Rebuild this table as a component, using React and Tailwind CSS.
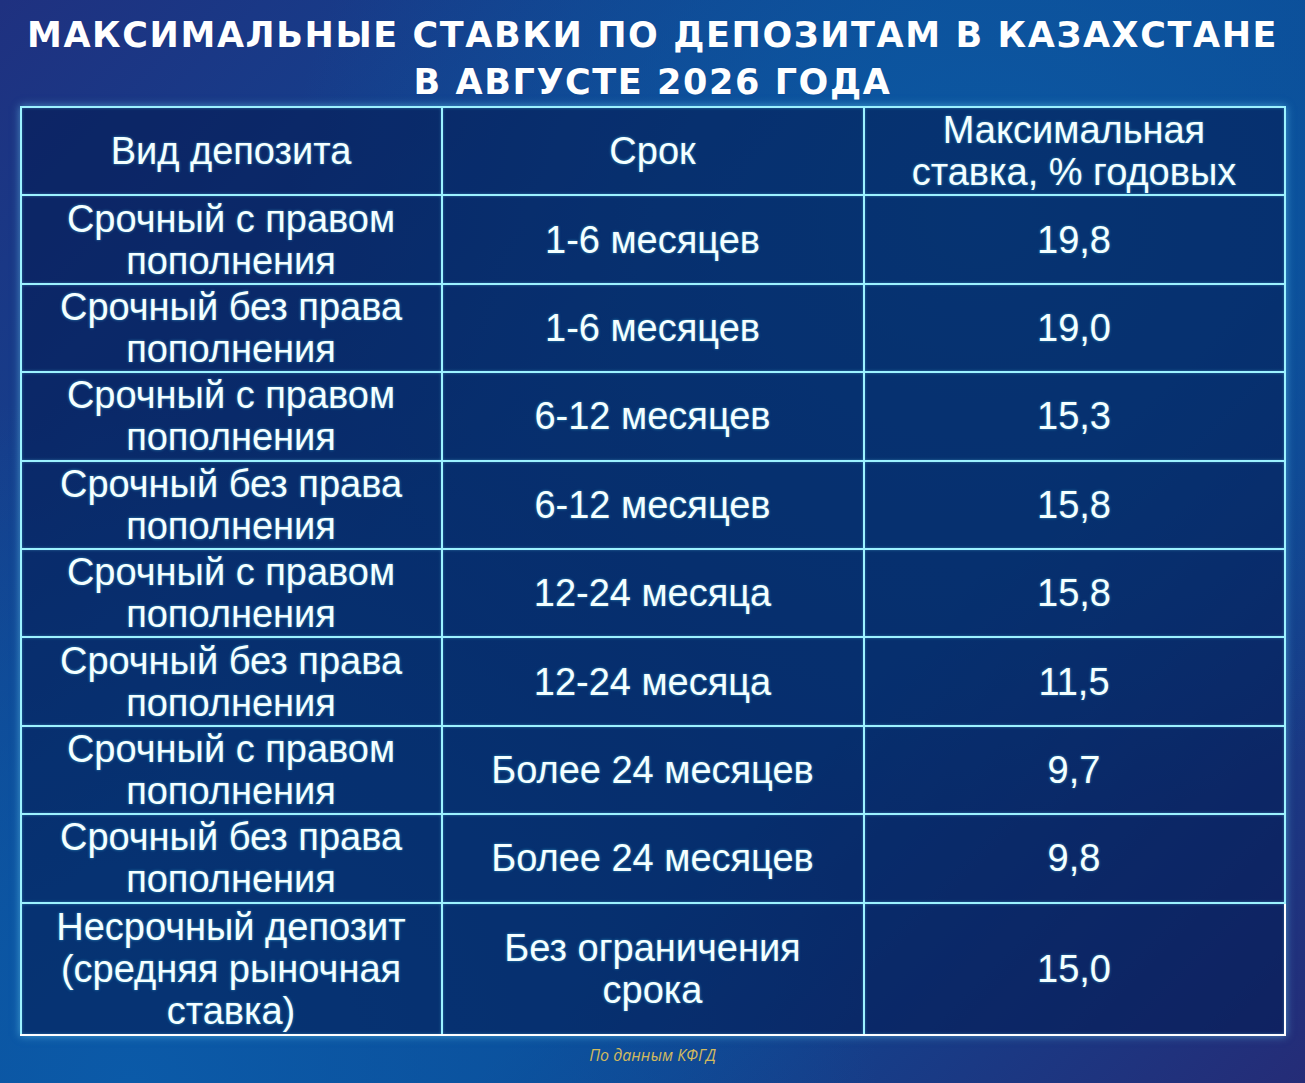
import React from 'react';

const rows = [
    { kind: ['Срочный с правом', 'пополнения'], term: ['1-6 месяцев'], rate: '19,8' },
    { kind: ['Срочный без права', 'пополнения'], term: ['1-6 месяцев'], rate: '19,0' },
    { kind: ['Срочный с правом', 'пополнения'], term: ['6-12 месяцев'], rate: '15,3' },
    { kind: ['Срочный без права', 'пополнения'], term: ['6-12 месяцев'], rate: '15,8' },
    { kind: ['Срочный с правом', 'пополнения'], term: ['12-24 месяца'], rate: '15,8' },
    { kind: ['Срочный без права', 'пополнения'], term: ['12-24 месяца'], rate: '11,5' },
    { kind: ['Срочный с правом', 'пополнения'], term: ['Более 24 месяцев'], rate: '9,7' },
    { kind: ['Срочный без права', 'пополнения'], term: ['Более 24 месяцев'], rate: '9,8' },
];

const cellText = "text-[38px] leading-[42px] text-[#f4ffff] [text-shadow:0_0_3px_rgba(90,220,255,0.55)]";
const cell = "border-2 border-[#9cf2ff] text-center align-middle p-0 shadow-[inset_0_0_3px_rgba(120,230,255,0.35)]";

const Lines = ({ items }) => (
    <div className={cellText}>
        {items.map((t, i) => <div key={i}>{t}</div>)}
    </div>
);

const App = () => {
    return (
        <div className="w-[1305px] h-[1083px] overflow-hidden bg-[radial-gradient(ellipse_at_10%_100%,#0b5aa8_0%,transparent_45%),radial-gradient(ellipse_at_75%_20%,#0c58a2_0%,transparent_50%),linear-gradient(135deg,#1f3180_0%,#0d4a95_40%,#0b4b96_65%,#252c77_100%)] font-['Liberation_Sans',Arial,sans-serif]">
            <h1 className="pt-[12px] text-center text-white font-['DejaVu_Sans',sans-serif] font-bold text-[35px] leading-[47px] tracking-[1.6px] uppercase">
                Максимальные ставки по депозитам в Казахстане<br />в августе 2026 года
            </h1>

            <table className="mx-auto w-[1264px] border-collapse table-fixed bg-[#031b52]/60 shadow-[0_0_8px_rgba(120,230,255,0.5)]">
                <colgroup>
                    <col className="w-[421px]" />
                    <col className="w-[422px]" />
                    <col className="w-[421px]" />
                </colgroup>
                <thead>
                    <tr className="h-[88.4px]">
                        <th className={cell + ' font-normal'}><Lines items={['Вид депозита']} /></th>
                        <th className={cell + ' font-normal'}><Lines items={['Срок']} /></th>
                        <th className={cell + ' font-normal'}><Lines items={['Максимальная', 'ставка, % годовых']} /></th>
                    </tr>
                </thead>
                <tbody>
                    {rows.map((r, i) => (
                        <tr key={i} className="h-[88.4px]">
                            <td className={cell}><Lines items={r.kind} /></td>
                            <td className={cell}><Lines items={r.term} /></td>
                            <td className={cell}><Lines items={[r.rate]} /></td>
                        </tr>
                    ))}
                    <tr className="h-[132px]">
                        <td className={cell + ' border-b-white'}><Lines items={['Несрочный депозит', '(средняя рыночная', 'ставка)']} /></td>
                        <td className={cell + ' border-b-white'}><Lines items={['Без ограничения', 'срока']} /></td>
                        <td className={cell + ' border-b-white border-r-white'}><Lines items={['15,0']} /></td>
                    </tr>
                </tbody>
            </table>

            <p className="mt-[7px] text-center font-['Open_Sans',sans-serif] italic text-[16px] text-[#d2ba5e]">
                По данным КФГД
            </p>
        </div>
    );
};

export default App;
